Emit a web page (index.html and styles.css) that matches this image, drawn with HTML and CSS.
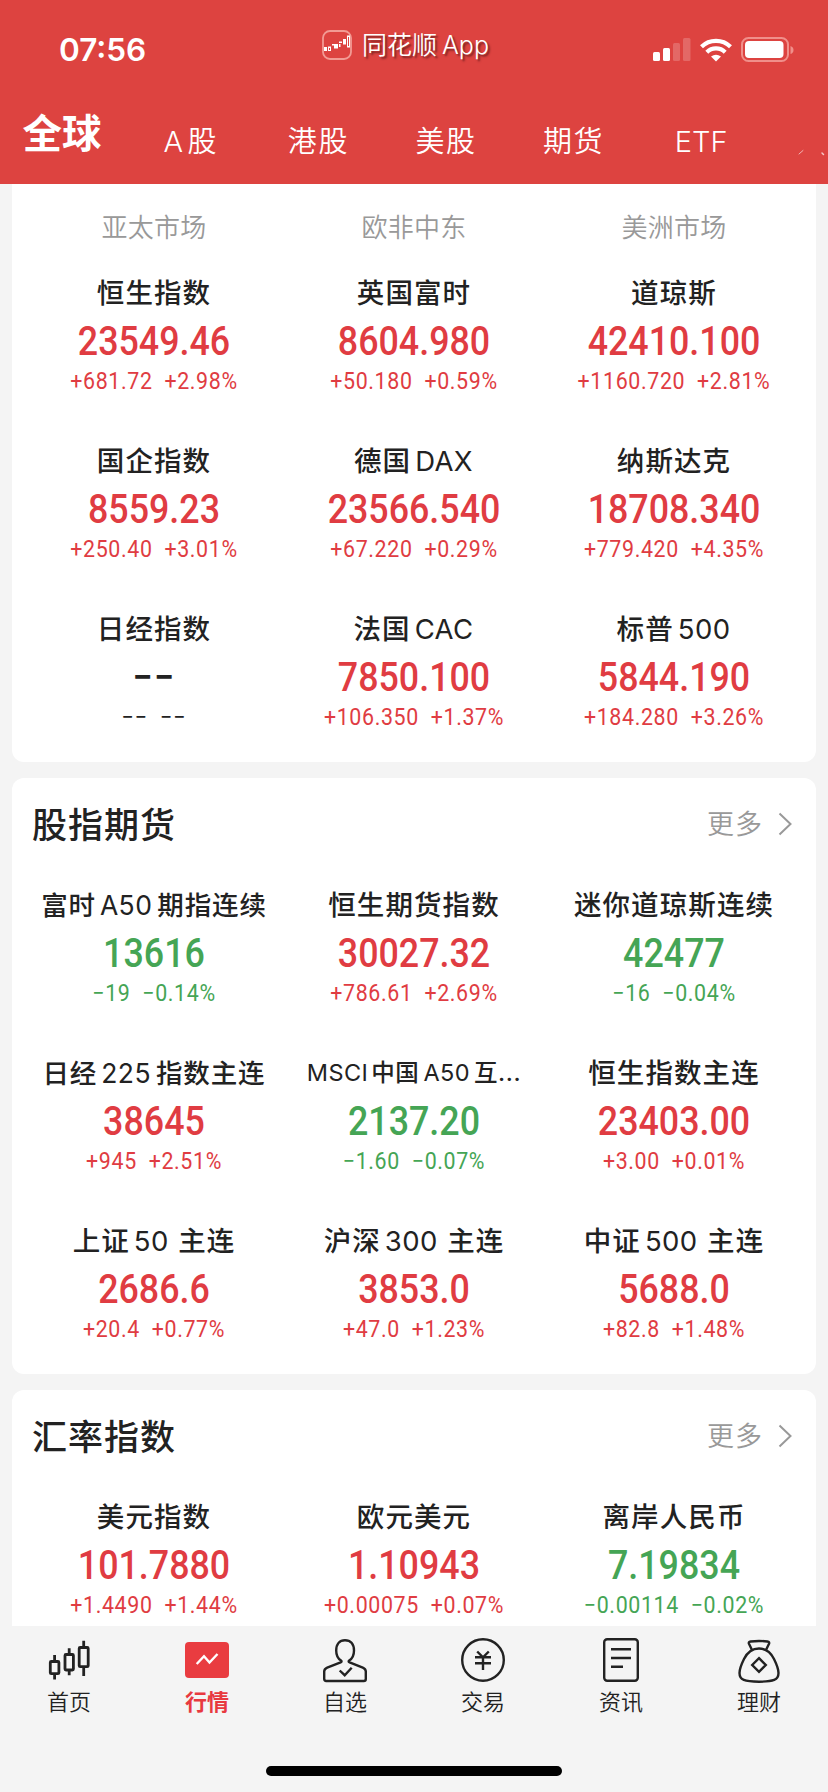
FILE: index.html
```html
<!DOCTYPE html>
<html lang="zh-CN">
<head>
  <meta charset="utf-8">
  <title>行情</title>
  <link rel="stylesheet" href="styles.css">
</head>
<body>
  <div class="app">
    <header class="header">
      <div class="status">
        <div class="time">07:56</div>
        <div class="brand">
          <svg width="30" height="30" viewBox="0 0 30 30">
            <rect x="1" y="1" width="28" height="28" rx="7" fill="none" stroke="#f29b94" stroke-width="1.8"/>
            <g fill="#fff">
              <rect x="2" y="17" width="3" height="4"/>
              <rect x="10" y="14" width="3" height="1.5"/>
              <rect x="12" y="14" width="4" height="4.5"/>
              <rect x="17" y="11.5" width="3" height="1.5"/>
              <rect x="17" y="14" width="1.5" height="3"/>
              <rect x="21" y="9" width="3" height="5.5"/>
            </g>
            <g fill="none" stroke="#fff">
              <rect x="6.5" y="17" width="2" height="3.5"/>
              <rect x="25.5" y="6" width="2" height="11"/>
            </g>
          </svg>
          <span>同花顺<i>App</i></span>
        </div>
        <div class="signals">
          <svg width="38" height="24" viewBox="0 0 38 24" fill="#fff">
            <rect x="0" y="14" width="7" height="9" rx="1.5"/>
            <rect x="10" y="10" width="7" height="13" rx="1.5"/>
            <rect x="20" y="5" width="7" height="18" rx="1.5" opacity=".2"/>
            <rect x="30" y="0" width="7.500" height="23" rx="1.5" opacity=".2"/>
          </svg>
          <svg class="wifi" width="32" height="24" viewBox="0 0 32 24">
            <g fill="none" stroke="#fff" stroke-width="4.200">
              <path d="M1.500 8.800a20.800 20.800 0 0 1 29 0"/>
              <path d="M6.800 14.200a13.200 13.200 0 0 1 18.400 0"/>
            </g>
            <path fill="#fff" d="M16 23.500l-5-5q5-3.600 10 0z"/>
          </svg>
          <svg width="54" height="26" viewBox="0 0 54 26">
            <rect x="1" y="1" width="46" height="23" rx="6.500" fill="none" stroke="#f08f8a" stroke-width="2"/>
            <rect x="4" y="4" width="38.500" height="17" rx="4" fill="#fff"/>
            <path d="M49.500 9v8q3-1 3-4t-3-4z" fill="#f08f8a"/>
          </svg>
        </div>
      </div>
      <nav class="tabs">
        <span class="tab active">全球</span>
        <span class="tab"><i>A</i>股</span>
        <span class="tab">港股</span>
        <span class="tab">美股</span>
        <span class="tab">期货</span>
        <span class="tab etf">ETF</span>
        <svg width="30" height="14" viewBox="0 0 30 14" stroke="#fff" fill="none" stroke-linecap="round">
          <path d="M1 12l4-3.500" opacity=".6"/>
          <path d="M24 11l1.500 1.500" opacity=".7" stroke-width="1.500"/>
        </svg>
      </nav>
    </header>

    <main class="content">
      <section class="card first">
        <div class="grid markets">
          <span>亚太市场</span>
          <span>欧非中东</span>
          <span>美洲市场</span>
        </div>
        <div class="grid">
          <div class="cell up">
            <div class="name">恒生指数</div>
            <div class="price">23549.46</div>
            <div class="change"><span>+681.72</span><span>+2.98%</span></div>
          </div>
          <div class="cell up">
            <div class="name">英国富时</div>
            <div class="price">8604.980</div>
            <div class="change"><span>+50.180</span><span>+0.59%</span></div>
          </div>
          <div class="cell up">
            <div class="name">道琼斯</div>
            <div class="price">42410.100</div>
            <div class="change"><span>+1160.720</span><span>+2.81%</span></div>
          </div>
          <div class="cell up">
            <div class="name">国企指数</div>
            <div class="price">8559.23</div>
            <div class="change"><span>+250.40</span><span>+3.01%</span></div>
          </div>
          <div class="cell up">
            <div class="name">德国<i>DAX</i></div>
            <div class="price">23566.540</div>
            <div class="change"><span>+67.220</span><span>+0.29%</span></div>
          </div>
          <div class="cell up">
            <div class="name">纳斯达克</div>
            <div class="price">18708.340</div>
            <div class="change"><span>+779.420</span><span>+4.35%</span></div>
          </div>
          <div class="cell none">
            <div class="name">日经指数</div>
            <div class="price">−−</div>
            <div class="change"><span>−−</span><span>−−</span></div>
          </div>
          <div class="cell up">
            <div class="name">法国<i>CAC</i></div>
            <div class="price">7850.100</div>
            <div class="change"><span>+106.350</span><span>+1.37%</span></div>
          </div>
          <div class="cell up">
            <div class="name">标普<i>500</i></div>
            <div class="price">5844.190</div>
            <div class="change"><span>+184.280</span><span>+3.26%</span></div>
          </div>
        </div>
      </section>

      <section class="card">
        <div class="card-head">
          <h2>股指期货</h2>
          <a class="more"><span>更多</span>
            <svg width="14" height="24" viewBox="0 0 14 24"><path d="M1.500 1.500L12.500 12l-11 10.500" fill="none" stroke="#999" stroke-width="2"/></svg>
          </a>
        </div>
        <div class="grid">
          <div class="cell down">
            <div class="name medium">富时<i>A50</i>期指连续</div>
            <div class="price">13616</div>
            <div class="change"><span>−19</span><span>−0.14%</span></div>
          </div>
          <div class="cell up">
            <div class="name">恒生期货指数</div>
            <div class="price">30027.32</div>
            <div class="change"><span>+786.61</span><span>+2.69%</span></div>
          </div>
          <div class="cell down">
            <div class="name">迷你道琼斯连续</div>
            <div class="price">42477</div>
            <div class="change"><span>−16</span><span>−0.04%</span></div>
          </div>
          <div class="cell up">
            <div class="name medium">日经<i>225</i>指数主连</div>
            <div class="price">38645</div>
            <div class="change"><span>+945</span><span>+2.51%</span></div>
          </div>
          <div class="cell down">
            <div class="name small"><i>MSCI</i>中国<i>A50</i>互...</div>
            <div class="price">2137.20</div>
            <div class="change"><span>−1.60</span><span>−0.07%</span></div>
          </div>
          <div class="cell up">
            <div class="name">恒生指数主连</div>
            <div class="price">23403.00</div>
            <div class="change"><span>+3.00</span><span>+0.01%</span></div>
          </div>
          <div class="cell up">
            <div class="name">上证<i>50</i> 主连</div>
            <div class="price">2686.6</div>
            <div class="change"><span>+20.4</span><span>+0.77%</span></div>
          </div>
          <div class="cell up">
            <div class="name">沪深<i>300</i> 主连</div>
            <div class="price">3853.0</div>
            <div class="change"><span>+47.0</span><span>+1.23%</span></div>
          </div>
          <div class="cell up">
            <div class="name">中证<i>500</i> 主连</div>
            <div class="price">5688.0</div>
            <div class="change"><span>+82.8</span><span>+1.48%</span></div>
          </div>
        </div>
      </section>

      <section class="card">
        <div class="card-head">
          <h2>汇率指数</h2>
          <a class="more"><span>更多</span>
            <svg width="14" height="24" viewBox="0 0 14 24"><path d="M1.500 1.500L12.500 12l-11 10.500" fill="none" stroke="#999" stroke-width="2"/></svg>
          </a>
        </div>
        <div class="grid">
          <div class="cell up">
            <div class="name">美元指数</div>
            <div class="price">101.7880</div>
            <div class="change"><span>+1.4490</span><span>+1.44%</span></div>
          </div>
          <div class="cell up">
            <div class="name">欧元美元</div>
            <div class="price">1.10943</div>
            <div class="change"><span>+0.00075</span><span>+0.07%</span></div>
          </div>
          <div class="cell down">
            <div class="name">离岸人民币</div>
            <div class="price">7.19834</div>
            <div class="change"><span>−0.00114</span><span>−0.02%</span></div>
          </div>
        </div>
      </section>
    </main>

    <footer class="footer">
      <nav class="tabbar">
        <a class="item">
          <svg class="candles" viewBox="0 0 44 46">
            <rect x="3.300" y="23.500" width="8.600" height="12.200" rx="1"/>
            <rect x="18" y="16.500" width="8.400" height="15.500" rx="1"/>
            <rect x="32.200" y="9.500" width="9" height="19.200" rx="1"/>
            <path d="M7.600 17v6M7.600 36v5.500M22.200 10.300v6M22.200 32.300v5M36.700 2.700v6.500M36.700 29v9"/>
          </svg>
          首页
        </a>
        <a class="item active">
          <svg viewBox="0 0 44 46">
            <rect class="fill" x="0" y="4" width="44" height="36" rx="4"/>
            <path class="line" d="M11.700 26l7.300-7.800 5.500 6.300 8-8.500"/>
          </svg>
          行情
        </a>
        <a class="item">
          <svg viewBox="0 0 44 46">
            <path d="M18 22.500c-3-1.800-4.800-5.500-4.800-10C13.200 6 16.500 2.200 22 2.200S31 6 31 12.500c0 4.500-1.800 8.200-4.800 10-.8.600-.8 1.400.4 1.900L39.800 29.600c2 .8 3 1.900 3 3.900v7.500q0 2-2 2H3.200q-2 0-2-2v-7.500c0-2 1-3.100 3-3.900l13.400-5.200c1.200-.5 1.200-1.300.4-1.900z"/>
            <path d="M16.700 32.500l5 4.700 7-7.500"/>
          </svg>
          自选
        </a>
        <a class="item">
          <svg viewBox="0 0 44 46">
            <circle cx="22" cy="22" r="20.800"/>
            <path d="M16.200 13.500l5.800 5.800 5.800-5.800M14 19.200h16M14 25.300h16M22 19v13"/>
          </svg>
          交易
        </a>
        <a class="item">
          <svg viewBox="0 0 44 46">
            <rect x="5.200" y="1.200" width="33.600" height="41.600" rx="3"/>
            <path d="M12 11.300h20M12 20h20M12 28.700h12"/>
          </svg>
          资讯
        </a>
        <a class="item">
          <svg viewBox="0 0 44 46">
            <path d="M15 12l-3-6.200q-.8-2 1.600-2.300Q22 2.400 30.400 3.500q2.400.3 1.600 2.300L29 12"/>
            <path d="M22 10.500c7.500 0 12 4.500 15 10.500 3.200 6.500 4.500 10 4.500 14 0 7-5 8.700-19.500 8.700S2.500 42 2.500 35c0-4 1.300-7.500 4.500-14 3-6 7.500-10.500 15-10.500z"/>
            <path d="M22 20.200l6.800 6.800-6.800 6.800-6.800-6.800z"/>
          </svg>
          理财
        </a>
      </nav>
      <div class="home-bar"></div>
    </footer>
  </div>
</body>
</html>
```
FILE: styles.css
```css
* {
  box-sizing: border-box;
}

body {
  margin: 0;
  font-family: Inter, "Noto Sans CJK SC", sans-serif;
  background: #f4f4f4;
  color: #222;
}

i {
  font-style: normal;
}

svg {
  display: block;
}

.app {
  width: 828px;
  height: 1792px;
  display: flex;
  flex-direction: column;
  overflow: hidden;
}

.header {
  height: 184px;
  flex: none;
  background: #dd4340;
  color: #fff;
}

/* status bar */
.status {
  height: 98px;
  display: grid;
  grid-template-columns: 322px 1fr 176px;
}

.time {
  padding: 30px 0 0 59px;
  font-size: 31.5px;
  font-weight: 600;
  line-height: 40px;
}

.brand {
  display: flex;
  align-items: center;
  gap: 10px;
  height: 90px;
  font-size: 25px;
  font-weight: 350;
  text-shadow: 2px 2px 2px rgba(80, 20, 20, 0.7);
  white-space: nowrap;
}

.brand span {
  line-height: 36px;
}

.brand i {
  margin-left: 5px;
}

.signals {
  display: flex;
  gap: 9px;
  padding: 38px 0 0 1px;
}

.signals svg:last-child {
  margin-top: -1px;
}

.tabs {
  height: 86px;
  display: flex;
  align-items: center;
  font-size: 29px;
  font-weight: 350;
  overflow: hidden;
}

.tab {
  width: 127.6px;
  flex: none;
  text-align: center;
  letter-spacing: 1.6px;
  line-height: 87px;
}

.tab i {
  margin-right: 3px;
}

.tab.etf {
  letter-spacing: 0;
}

.tab.active {
  width: 127px;
  font-size: 39.5px;
  font-weight: 700;
  line-height: 72px;
  letter-spacing: 0;
  padding: 0 3px 14px 0;
}

.tabs svg {
  flex: none;
  margin: 16px 0 0 33px;
}

/* cards */
.content {
  flex: 1;
  min-height: 0;
  overflow: hidden;
  padding: 0 12px;
}

.card {
  background: #fff;
  border-radius: 12px;
  padding: 0 12px 29px;
  margin-bottom: 16px;
}

.card.first {
  border-radius: 0 0 12px 12px;
}

.grid {
  display: grid;
  grid-template-columns: repeat(3, 260px);
  row-gap: 39px;
  text-align: center;
}

.markets {
  height: 84px;
  line-height: 87px;
  font-size: 26px;
  font-weight: 350;
  letter-spacing: 0.3px;
  color: #999;
}

.card-head {
  display: flex;
  justify-content: space-between;
  align-items: center;
  height: 92px;
  margin-bottom: 10px;
  padding: 0 12px 0 8px;
}

.card-head h2 {
  margin: 0 0 3px;
  font-size: 35px;
  font-weight: 500;
  letter-spacing: 1px;
}

.more {
  display: flex;
  align-items: center;
  gap: 15px;
  font-size: 27px;
  line-height: 40px;
  font-weight: 350;
  letter-spacing: 1px;
  color: #999;
}

.more span {
  padding-top: 2px;
}

.cell {
  height: 129px;
  white-space: nowrap;
}

.name {
  height: 48px;
  line-height: 50px;
  font-size: 27.5px;
  font-weight: 450;
  letter-spacing: 1.1px;
}

.name i {
  margin: 0 1px 0 4px;
  font-weight: 400;
  letter-spacing: 0.4px;
}

.name.medium {
  font-size: 26.5px;
  letter-spacing: 0.9px;
}

.name.medium i {
  margin-right: 5px;
}

.name.small {
  font-size: 23.5px;
  letter-spacing: 0.6px;
}

.name.small i {
  margin-right: 4px;
}

.name.small i:first-child {
  margin: 0 3px 0 0;
}

/* narrow digits */
.price,
.change {
  font-family: Roboto, sans-serif;
  transform: scaleX(0.91);
}

.price {
  height: 48px;
  line-height: 51px;
  font-size: 40px;
  font-weight: 500;
  transform: scaleX(0.895);
}

.change {
  height: 33px;
  line-height: 35px;
  font-size: 23.5px;
  font-weight: 450;
  letter-spacing: 0.7px;
  display: flex;
  justify-content: center;
  gap: 13px;
}

.none .price {
  letter-spacing: 1.5px;
}

.none .change {
  letter-spacing: 1.2px;
}

.up .price,
.up .change {
  color: #e03c42;
}

.down .price,
.down .change {
  color: #45a555;
}

/* bottom bar */
.footer {
  height: 166px;
  flex: none;
  background: #f4f4f4;
}

.tabbar {
  height: 140px;
  padding-top: 12px;
  display: grid;
  grid-template-columns: repeat(6, 1fr);
}

.item {
  display: flex;
  flex-direction: column;
  align-items: center;
  font-size: 22px;
  font-weight: 350;
  line-height: 36px;
}

.item svg {
  width: 44px;
  height: 46px;
  fill: none;
  stroke: #222;
  stroke-width: 2.4;
}

.item .candles {
  stroke-width: 2.8;
}

.item.active {
  color: #e8393f;
  font-weight: 700;
}

.item .fill {
  fill: #e93c40;
  stroke: none;
}

.item .line {
  stroke: #fff;
}

.home-bar {
  width: 296px;
  height: 10px;
  margin: 0 auto;
  border-radius: 5px;
  background: #000;
}
```
